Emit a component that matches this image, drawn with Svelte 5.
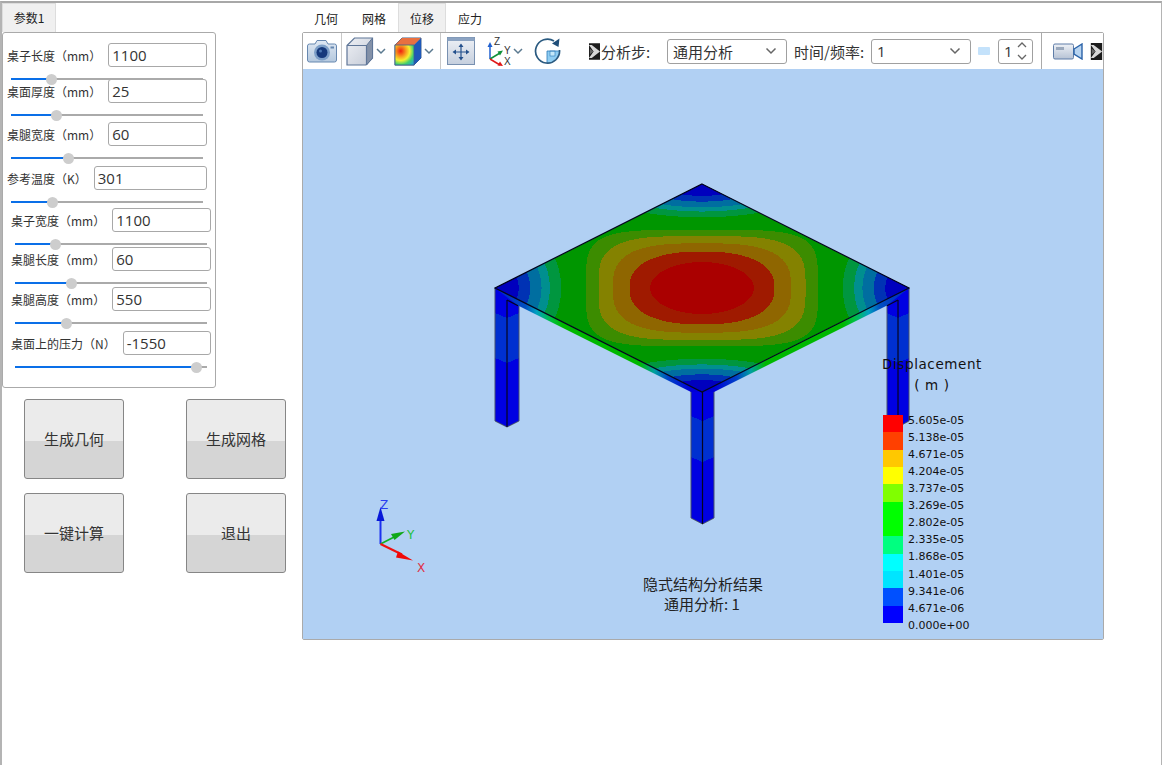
<script>
  const params = [
    { label: '桌子长度（mm）', value: '1100', pos: 40, group: 'a', gap: 0 },
    { label: '桌面厚度（mm）', value: '25', pos: 45, group: 'a', gap: -1 },
    { label: '桌腿宽度（mm）', value: '60', pos: 57, group: 'a', gap: 6 },
    { label: '参考温度（K）', value: '301', pos: 41, group: 'a', gap: 7 },
    { label: '桌子宽度（mm）', value: '1100', pos: 40, group: 'b', gap: 5 },
    { label: '桌腿长度（mm）', value: '60', pos: 56, group: 'b', gap: 2 },
    { label: '桌腿高度（mm）', value: '550', pos: 51, group: 'b', gap: 3 },
    { label: '桌面上的压力（N）', value: '-1550', pos: 181, group: 'b', gap: 7 }
  ];
  const actions = ['生成几何', '生成网格', '一键计算', '退出'];
  const tabs = ['几何', '网格', '位移', '应力'];
  let activeTab = $state('位移');

  const cx = 702, cy = 288, hw = 207, hh = 104;

  // contours round the plate centre, a rounded rectangle further out
  const inner = [
    { a: 0.56, p: 4.5, color: '#3c8c00' },
    { a: 0.5, p: 3.6, color: '#848200' },
    { a: 0.43, p: 3, color: '#8f6600' },
    { a: 0.35, p: 2.4, color: '#9f1a00' },
    { a: 0.25, p: 2, color: '#aa0000' }
  ];

  function contour(a, p) {
    const pts = [];
    for (let i = 0; i < 160; i++) {
      const t = (i / 160) * Math.PI * 2;
      const c = Math.cos(t), s = Math.sin(t);
      const x = Math.sign(c) * a * Math.pow(Math.abs(c), 2 / p);
      const y = Math.sign(s) * a * Math.pow(Math.abs(s), 2 / p);
      pts.push(`${(cx + x * hw).toFixed(1)},${(cy + y * hh).toFixed(1)}`);
    }
    return pts.join(' ');
  }

  const bands = [
    { r: 0.32, color: '#00963f' },
    { r: 0.265, color: '#008f8f' },
    { r: 0.225, color: '#006ea0' },
    { r: 0.17, color: '#0032b4' },
    { r: 0.115, color: '#0000be' }
  ];

  const legs = [
    { x: 507, top: 300, sideTop: 288, end: 427, w: 12, b1: 318, b2: 363 },
    { x: 898, top: 300, sideTop: 288, end: 427, w: 11, b1: 318, b2: 363 },
    { x: 702.5, top: 392, sideTop: 386, end: 524, w: 11.5, b1: 421, b2: 462 }
  ];

  function chevron(leg, y) {
    return `${leg.x - leg.w},${y - 5} ${leg.x},${y} ${leg.x + leg.w},${y - 5}`;
  }

  const legendColors = ['#ff0000', '#ff4000', '#ffc800', '#ffff00', '#80ff00', '#00ff00', '#00ff00', '#00ff80', '#00ffff', '#00e5ff', '#0050ff', '#0000ff'];
  const legendStops = [415, 432, 450, 467, 484, 502, 519, 536, 554, 571, 588, 606, 623];
  const legendLabels = ['5.605e-05', '5.138e-05', '4.671e-05', '4.204e-05', '3.737e-05', '3.269e-05', '2.802e-05', '2.335e-05', '1.868e-05', '1.401e-05', '9.341e-06', '4.671e-06', '0.000e+00'];
</script>

{#snippet chev()}
  <svg class="chev" width="12" height="10" viewBox="0 0 12 10"><path d="M2 3l4 4 4-4" fill="none" stroke="#5b7a90" stroke-width="1.5" /></svg>
{/snippet}

{#snippet broken(w)}
  <svg class="broken" width={w} height="17" viewBox="0 0 12 18">
    <rect width="12" height="18" fill="#1c1c1c" />
    <path d="M0 2h3l9 7-9 7H0l5-7z" fill="#d8d8d8" />
    <path d="M1 6l4 3-4 3z" fill="#666" />
  </svg>
{/snippet}

<div class="app">
  <aside class="left">
    <div class="tabs"><span class="tab on">参数1</span></div>
    <div class="panel">
      {#each params as p}
        <div class="param {p.group}" style="margin-top:{p.gap}px">
          <div class="row">
            <span class="label">{p.label}</span>
            <div class="input">{p.value}</div>
          </div>
          <div class="slider">
            <div class="fill" style="width:{p.pos}px"></div>
            <div class="handle" style="left:{p.pos}px"></div>
          </div>
        </div>
      {/each}
    </div>
    <div class="actions">
      {#each actions as a}
        <button class="action">{a}</button>
      {/each}
    </div>
  </aside>

  <main class="right">
    <div class="tabs">
      {#each tabs as t}
        <button class="tab" class:on={activeTab === t} onclick={() => activeTab = t}>{t}</button>
      {/each}
    </div>
    <div class="viewer">
      <div class="toolbar">
        <svg class="t-camera" width="30" height="24" viewBox="0 0 30 24">
          <defs><linearGradient id="cam" x1="0" y1="0" x2="0" y2="1"><stop offset="0" stop-color="#dfe8f3" /><stop offset="1" stop-color="#b4c8de" /></linearGradient></defs>
          <path d="M2.5 5H8l2-3.5h9L21 5h6.500a2 2 0 0 1 2 2v14a2 2 0 0 1-2 2h-25a2 2 0 0 1-2-2V7a2 2 0 0 1 2-2z" fill="url(#cam)" stroke="#6788b0" />
          <circle cx="15" cy="13.500" r="8" fill="#7d9fc8" />
          <circle cx="15" cy="13.500" r="5.500" fill="#16397c" />
          <circle cx="13.500" cy="12" r="1.500" fill="#4d78b4" />
          <rect x="23.500" y="7.500" width="3.500" height="2" fill="#6788b0" />
        </svg>
        <span class="sep s1"></span>
        <svg class="t-cube" width="28" height="29" viewBox="0 0 28 29">
          <defs><linearGradient id="face" x1="0" y1="0" x2="1" y2="1"><stop offset="0" stop-color="#eef0f5" /><stop offset="1" stop-color="#c4cad6" /></linearGradient></defs>
          <path d="M1 8.500 8.500 1H26.500v20L20 28H1z" fill="url(#face)" stroke="#5f7698" stroke-width="1.200" />
          <path d="M20.500 8.500 26.500 1v20L20.500 28z" fill="#8391a8" stroke="#5f7698" />
          <path d="M1 8.500h19.500V28" fill="none" stroke="#5f7698" stroke-width="1.200" />
        </svg>
        {@render chev()}
        <svg class="t-color" width="28" height="29" viewBox="0 0 28 29">
          <defs><radialGradient id="heat" cx="0.3" cy="0.3" r="0.95"><stop offset="0" stop-color="#f01e10" /><stop offset="0.3" stop-color="#f8a020" /><stop offset="0.5" stop-color="#f4f030" /><stop offset="0.72" stop-color="#40d070" /><stop offset="1" stop-color="#20a0e0" /></radialGradient></defs>
          <path d="M1 8 8 1H27v20l-7 7H1z" fill="#e8a060" stroke="#40608a" />
          <path d="M1 8 8 1H27L20 8z" fill="#e87040" />
          <path d="M20 8 27 1v20l-7 7z" fill="#1e58b8" />
          <rect x="1" y="8" width="19" height="20" fill="url(#heat)" stroke="#40608a" stroke-width="0.800" />
        </svg>
        {@render chev()}
        <span class="sep s2"></span>
        <svg class="t-fit" width="28" height="28" viewBox="0 0 28 28">
          <defs><linearGradient id="fit" x1="0" y1="0" x2="0" y2="1"><stop offset="0" stop-color="#eef1f6" /><stop offset="1" stop-color="#c5cfde" /></linearGradient></defs>
          <rect x="0.500" y="0.500" width="27" height="27" fill="url(#fit)" stroke="#7890b0" />
          <rect x="0.500" y="0.500" width="27" height="3.500" fill="#8ba3c2" />
          <path d="M14 9v12M8 15h12" stroke="#24508c" stroke-width="1.200" />
          <path d="M14 6.500l-2.500 3.500h5zM14 23.500l-2.500-3.500h5zM5.500 15l3.500-2.500v5zM22.500 15 19 12.500v5z" fill="#24508c" />
        </svg>
        <svg class="t-triad" width="24" height="30" viewBox="0 0 24 30">
          <path d="M3 23V9" stroke="#2060d0" stroke-width="1.500" />
          <path d="M3 6 0.500 11h5z" fill="#2060d0" />
          <path d="M3 23 13 17" stroke="#10903a" stroke-width="1.500" />
          <path d="M16 14.500 10.500 15.500l2.500 4z" fill="#10903a" />
          <path d="M3 23 13 29" stroke="#e01818" stroke-width="1.500" />
          <path d="M16 30 10.500 29.500 13 25.500z" fill="#e01818" />
          <text x="7" y="9" class="tiny">Z</text>
          <text x="17" y="18" class="tiny">Y</text>
          <text x="17" y="29" class="tiny">X</text>
        </svg>
        {@render chev()}
        <svg class="t-rotate" width="28" height="28" viewBox="0 0 28 28">
          <path d="M13 14h12A12 12 0 0 1 13 26z" fill="#8fcdf2" />
          <rect x="16" y="14" width="5" height="5" fill="#c4e8fa" stroke="#2a78b8" stroke-width="0.600" />
          <path d="M13 14v12M13 14h12" stroke="#2a78b8" stroke-width="0.800" />
          <path d="M20 4A12 12 0 1 0 25.500 13" fill="none" stroke="#2a5a80" stroke-width="1.700" />
          <path d="M25.500 1.500 24.500 10 18 6.500z" fill="#1f4e79" />
        </svg>
        <span class="b1">{@render broken(11)}</span>
        <span class="tool-label w1">分析步:</span>
        <div class="select w2">通用分析<svg width="12" height="8" viewBox="0 0 12 8"><path d="M1.500 1.500 6 6l4.500-4.500" fill="none" stroke="#666" stroke-width="1.500" /></svg></div>
        <span class="tool-label w3">时间/频率:</span>
        <div class="select w4">1<svg width="12" height="8" viewBox="0 0 12 8"><path d="M1.500 1.500 6 6l4.500-4.500" fill="none" stroke="#666" stroke-width="1.500" /></svg></div>
        <span class="blue-chip"></span>
        <div class="spin">1
          <svg width="12" height="22" viewBox="0 0 12 22"><path d="M2 7l4-4 4 4M2 15l4 4 4-4" fill="none" stroke="#666" stroke-width="1.300" /></svg>
        </div>
        <span class="sep s3"></span>
        <svg class="t-video" width="30" height="17" viewBox="0 0 30 17">
          <defs><linearGradient id="vid" x1="0" y1="0" x2="0" y2="1"><stop offset="0" stop-color="#eef1f6" /><stop offset="1" stop-color="#b6c2d4" /></linearGradient></defs>
          <rect x="0.500" y="1" width="20" height="15" rx="1.500" fill="url(#vid)" stroke="#5f7da8" />
          <rect x="3" y="4" width="8" height="3" fill="#9aa8bc" />
          <path d="M21 6l8-5v15l-8-5z" fill="#b8d4f0" stroke="#2a62a8" stroke-width="1.400" />
        </svg>
        <span class="b2">{@render broken(13)}</span>
      </div>

      <div class="canvas">
        <svg class="scene" viewBox="303 69 800 570" width="800" height="570">
          <defs>
            <clipPath id="plate"><polygon points="702,184 909,288 702,392 495,288" /></clipPath>
            <linearGradient id="stripL" gradientUnits="userSpaceOnUse" x1="507" y1="0" x2="691" y2="0">
              <stop offset="0" stop-color="#0030c8" />
              <stop offset="0.1" stop-color="#0050c0" />
              <stop offset="0.16" stop-color="#00a0c0" />
              <stop offset="0.24" stop-color="#00c040" />
              <stop offset="0.3" stop-color="#00b800" />
              <stop offset="0.72" stop-color="#00b800" />
              <stop offset="0.8" stop-color="#00a0a0" />
              <stop offset="0.88" stop-color="#0040c8" />
              <stop offset="1" stop-color="#0000d8" />
            </linearGradient>
            <linearGradient id="stripR" gradientUnits="userSpaceOnUse" x1="898" y1="0" x2="714" y2="0">
              <stop offset="0" stop-color="#0030c8" />
              <stop offset="0.1" stop-color="#0050c0" />
              <stop offset="0.16" stop-color="#00a0c0" />
              <stop offset="0.24" stop-color="#00c040" />
              <stop offset="0.3" stop-color="#00b800" />
              <stop offset="0.72" stop-color="#00b800" />
              <stop offset="0.8" stop-color="#00a0a0" />
              <stop offset="0.88" stop-color="#0040c8" />
              <stop offset="1" stop-color="#0000d8" />
            </linearGradient>
          </defs>

          {#each legs as leg}
            <g shape-rendering="crispEdges">
              <polygon points="{leg.x - leg.w},{leg.sideTop} {leg.x + leg.w},{leg.sideTop} {leg.x + leg.w},{leg.end - 6} {leg.x},{leg.end} {leg.x - leg.w},{leg.end - 6}" fill="#0000e2" />
              <polygon points="{chevron(leg, leg.b1)} {leg.x + leg.w},{leg.b2 - 5} {leg.x},{leg.b2} {leg.x - leg.w},{leg.b2 - 5}" fill="#0030d0" />
            </g>
            <path d="M{leg.x - leg.w} {leg.sideTop}V{leg.end - 6}L{leg.x} {leg.end}L{leg.x + leg.w} {leg.end - 6}V{leg.sideTop}" fill="none" stroke="#46506e" stroke-width="1" />
            <path d="M{leg.x} {leg.top}V{leg.end}" stroke="#05051e" stroke-width="1.200" />
          {/each}

          <polygon points="495,288 702,392 691,392 518,305.500" fill="url(#stripL)" />
          <polygon points="909,288 702,392 714,392 887,305.500" fill="url(#stripR)" />
          <path d="M507 300 518 305.700M898 300 887 305.700" stroke="#05051e" stroke-width="1.200" />

          <g clip-path="url(#plate)" shape-rendering="crispEdges">
            <polygon points="702,184 909,288 702,392 495,288" fill="#009600" />
            {#each inner as c}
              <polygon points={contour(c.a, c.p)} fill={c.color} />
            {/each}
            {#each bands as b}
              <ellipse cx="495" cy="288" rx={b.r * hw} ry={b.r * hw * 1.05} fill={b.color} />
              <ellipse cx="909" cy="288" rx={b.r * hw} ry={b.r * hw * 1.05} fill={b.color} />
              <ellipse cx="702" cy="184" rx={b.r * hh * 3.4} ry={b.r * hh} fill={b.color} />
              <ellipse cx="702" cy="392" rx={b.r * hh * 3.4} ry={b.r * hh} fill={b.color} />
            {/each}
          </g>
          <polygon points="702,184 909,288 702,392 495,288" fill="none" stroke="#05051e" stroke-width="1.200" />

          {#each legendColors as color, i}
            <rect x="883" y={legendStops[i]} width="20" height={legendStops[i + 1] - legendStops[i]} fill={color} shape-rendering="crispEdges" />
          {/each}
          {#each legendLabels as label, i}
            <text x="908" y={424 + i * 17.060} class="legend">{label}</text>
          {/each}
          <text x="932" y="369" text-anchor="middle" class="legend-title">Displacement</text>
          <text x="932" y="390" text-anchor="middle" class="legend-title">( m )</text>

          <path d="M380.500 544V518" stroke="#1c30f0" stroke-width="2" />
          <path d="M380.500 507l-4 14h8z" fill="#0818d8" />
          <path d="M380.500 544 398 535" stroke="#10b020" stroke-width="1.600" />
          <path d="M405 531.500 391 534l3.500 6z" fill="#10a818" />
          <path d="M380.500 544 402 554.500" stroke="#f01010" stroke-width="2" />
          <path d="M413 560.500 398 551.500l-2 6z" fill="#f00808" />
          <text x="380" y="509" class="axis z">Z</text>
          <text x="407" y="539" class="axis y">Y</text>
          <text x="417" y="572" class="axis x">X</text>

          <text x="703" y="590" text-anchor="middle" class="caption">隐式结构分析结果</text>
          <text x="702" y="610" text-anchor="middle" class="caption">通用分析: 1</text>
        </svg>
      </div>
    </div>
  </main>
</div>

<style>
  :global(body) {
    margin: 0;
    background: #fff;
    font-family: "Noto Sans CJK SC", "Noto Sans", sans-serif;
  }

  .app {
    box-sizing: border-box;
    width: 1162px;
    height: 764px;
    margin-top: 1px;
    border-top: 2px solid #a8a8a8;
    border-left: 2px solid #b4b4b4;
    border-right: 1px solid #b4b4b4;
    display: flex;
    color: #333;
  }

  .left {
    width: 300px;
    flex-shrink: 0;
  }

  .tabs {
    display: flex;
    height: 29px;
  }

  .tab {
    box-sizing: border-box;
    width: 48px;
    height: 29px;
    padding: 0;
    border: 1px solid transparent;
    border-bottom: none;
    background: none;
    color: #222;
    font-family: inherit;
    font-size: 12px;
    text-align: center;
    line-height: 27px;
  }

  .tab.on {
    background: #f0f0f0;
    border-color: #ddd;
  }

  .left .tab {
    display: block;
    width: 54px;
  }

  .panel {
    box-sizing: border-box;
    width: 214px;
    height: 356px;
    padding-top: 10px;
    border: 1px solid #aaa;
    border-radius: 3px;
  }

  .param.a {
    padding: 0 8px 0 4px;
  }

  .param.b {
    padding: 0 4px 0 8px;
  }

  .row {
    display: flex;
    align-items: center;
    gap: 7px;
    height: 24px;
  }

  .label {
    font-size: 12px;
    white-space: nowrap;
    color: #333;
  }

  .input {
    box-sizing: border-box;
    flex: 1;
    height: 24px;
    padding-left: 3px;
    border: 1px solid #a8a8a8;
    border-radius: 3px;
    background: #fff;
    font-family: "Open Sans", sans-serif;
    font-size: 15px;
    line-height: 22px;
    color: #333;
  }

  .slider {
    position: relative;
    height: 2px;
    margin: 11px 4px 0;
    background: #aaa;
  }

  .fill {
    height: 2px;
    background: #0a6fe8;
  }

  .handle {
    position: absolute;
    top: -4px;
    width: 11px;
    height: 11px;
    margin-left: -5px;
    border-radius: 50%;
    background: #cdcdcd;
  }

  .actions {
    display: grid;
    grid-template-columns: 100px 100px;
    column-gap: 62px;
    row-gap: 14px;
    margin: 11px 0 0 22px;
  }

  .action {
    box-sizing: border-box;
    height: 80px;
    padding: 0 0 2px;
    border: 1px solid #868686;
    border-radius: 3px;
    background: linear-gradient(#ebebeb 52%, #d5d5d5 52%);
    color: #333;
    font-family: inherit;
    font-size: 15px;
  }

  .right {
    flex: 1;
    min-width: 0;
  }

  .viewer {
    box-sizing: border-box;
    width: 802px;
    height: 608px;
    border: 1px solid #aaa;
    border-radius: 2px;
    display: flex;
    flex-direction: column;
  }

  .toolbar {
    height: 36px;
    flex-shrink: 0;
    display: flex;
    align-items: center;
    padding-left: 4px;
    overflow: hidden;
    background: #fff;
  }

  .toolbar > * {
    flex-shrink: 0;
  }

  .sep {
    width: 1px;
    height: 36px;
    background: #c8c8c8;
  }

  .chev { margin-left: 1px; }
  .s1 { margin: 0 3px 0 4px; }
  .s2 { margin-left: 5px; }
  .s3 { margin-left: 8px; background: #aaa; }
  .t-cube { margin-left: 1px; }
  .t-color { margin-left: 7px; }
  .t-fit { margin-left: 6px; }
  .t-triad { margin-left: 12px; overflow: visible; }
  .t-rotate { margin-left: 10px; }
  .t-video { margin-left: 11px; }
  .b1 { margin-left: 27px; display: flex; }
  .b2 { margin-left: 7px; display: flex; }

  .tiny {
    font-family: "Liberation Sans", sans-serif;
    font-size: 10px;
    fill: #333;
  }

  .tool-label {
    font-size: 15px;
    color: #333;
    white-space: nowrap;
  }

  .w1 { width: 66px; margin-left: 1px; }
  .w3 { width: 77px; margin-left: 7px; }

  .select {
    box-sizing: border-box;
    height: 25px;
    padding: 0 9px 0 5px;
    border: 1px solid #a0a0a0;
    border-radius: 3px;
    display: flex;
    align-items: center;
    justify-content: space-between;
    font-size: 15px;
    color: #333;
  }

  .w2 { width: 120px; }
  .w4 { width: 100px; font-family: "Open Sans", sans-serif; }

  .blue-chip {
    width: 12px;
    height: 8px;
    margin-left: 7px;
    border-radius: 1px;
    background: #c4e2fb;
  }

  .spin {
    box-sizing: border-box;
    width: 35px;
    height: 25px;
    margin-left: 8px;
    padding: 0 4px 0 5px;
    border: 1px solid #a0a0a0;
    border-radius: 3px;
    display: flex;
    align-items: center;
    justify-content: space-between;
    font-family: "Open Sans", sans-serif;
    font-size: 15px;
    color: #333;
  }

  .canvas {
    flex: 1;
    background: #b1d0f3;
    overflow: hidden;
  }

  .scene {
    display: block;
  }

  .legend {
    font-family: "DejaVu Sans", sans-serif;
    font-size: 11px;
    fill: #111;
  }

  .legend-title {
    font-family: "DejaVu Sans", sans-serif;
    font-size: 13.500px;
    letter-spacing: 0.600px;
    fill: #111;
  }

  .axis {
    font-family: "DejaVu Sans", sans-serif;
    font-size: 12px;
  }

  .axis.z { fill: #2a3ef0; }
  .axis.y { fill: #20c040; }
  .axis.x { fill: #e03048; }

  .caption {
    font-size: 15px;
    fill: #222;
  }
</style>
